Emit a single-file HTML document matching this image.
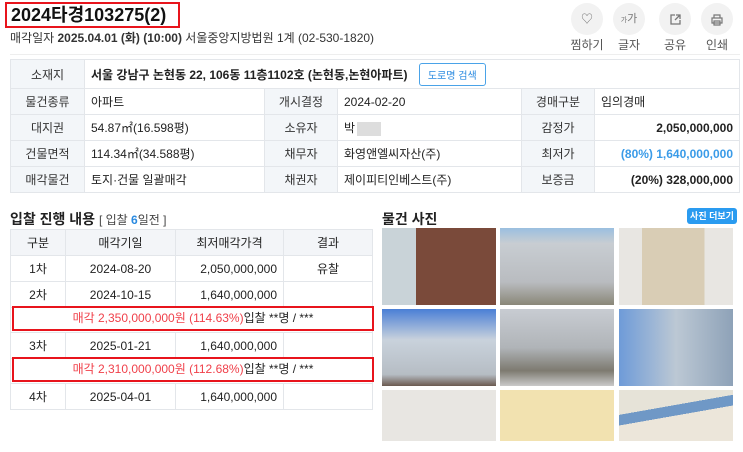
<!DOCTYPE html><html><head><meta charset="utf-8"><style>
*{margin:0;padding:0;box-sizing:border-box}
body{width:743px;height:452px;background:#fff;font-family:"Liberation Sans","Noto Sans CJK KR",sans-serif;color:#222;position:relative;overflow:hidden;font-size:12px}
.a{position:absolute}
.title{left:5px;top:2px;width:175px;height:26px;border:2px solid #e8141c;font-size:18px;font-weight:bold;line-height:22px;padding-left:4px;color:#111}
.sub{left:10px;top:29px;font-size:12px;color:#333}
.ic{width:32px;height:32px;border-radius:50%;background:#f2f2f2;top:3px;text-align:center;line-height:32px;color:#777;font-size:12px}
.il{top:36px;font-size:12px;color:#555;width:40px;text-align:center}
table{border-collapse:collapse;position:absolute}
td{border:1px solid #e3e6ea;font-size:12px;padding:0 6px;white-space:nowrap}
.m td{height:26px}
.m td.l{background:#f3f6f9;text-align:center;color:#333}
.m td.r{text-align:right;font-weight:bold}
.b td{text-align:center;height:26px}
.b tr.h td{background:#f3f5f8}
.red{color:#f0404a}
.box{border:2px solid #e8141c;left:12px;width:362px;height:25px;text-align:center;line-height:21px;font-size:12px}
.ph{position:absolute;width:114px}
</style></head><body>
<div class="a title">2024타경103275(2)</div>
<div class="a sub">매각일자 <b>2025.04.01 (화) (10:00)</b> 서울중앙지방법원 1계 (02-530-1820)</div>
<div class="a ic" style="left:571px">♡</div><div class="a il" style="left:567px">찜하기</div>
<div class="a ic" style="left:613px;font-size:11px"><span style="font-size:7px">가</span>가</div><div class="a il" style="left:609px">글자</div>
<div class="a ic" style="left:659px"><svg width="11" height="11" viewBox="0 0 11 11" style="vertical-align:middle"><path d="M5 1H1v9h9V6M6 1h4v4M10 1L5 6" fill="none" stroke="#777" stroke-width="1.3"/></svg></div><div class="a il" style="left:655px">공유</div>
<div class="a ic" style="left:701px"><svg width="12" height="12" viewBox="0 0 12 12" style="vertical-align:middle"><path d="M3 4V1h6v3M1 4h10v5H1zM3 7h6v4H3z" fill="#f2f2f2" stroke="#777" stroke-width="1.2"/></svg></div><div class="a il" style="left:697px">인쇄</div>
<div class="a" style="left:10px;top:54px;width:730px;border-top:1px solid #eee"></div>
<table class="m" style="left:10px;top:59px;width:730px">
<tr><td class="l" style="width:74px;height:29px">소재지</td><td colspan="5" style="font-weight:bold">서울 강남구 논현동 22, 106동 11층1102호 (논현동,논현아파트) <span style="display:inline-block;margin-left:8px;border:1px solid #4aa3e8;color:#2a8ae0;border-radius:3px;font-size:10px;font-weight:normal;padding:3px 8px">도로명 검색</span></td></tr>
<tr><td class="l">물건종류</td><td style="width:180px">아파트</td><td class="l" style="width:73px">개시결정</td><td style="width:184px">2024-02-20</td><td class="l" style="width:73px">경매구분</td><td>임의경매</td></tr>
<tr><td class="l">대지권</td><td>54.87㎡(16.598평)</td><td class="l">소유자</td><td>박<span style="display:inline-block;width:24px;height:14px;background:#ddd;vertical-align:middle;margin-left:2px"></span></td><td class="l">감정가</td><td class="r">2,050,000,000</td></tr>
<tr><td class="l">건물면적</td><td>114.34㎡(34.588평)</td><td class="l">채무자</td><td>화영앤엘씨자산(주)</td><td class="l">최저가</td><td class="r" style="color:#3a9be8">(80%) 1,640,000,000</td></tr>
<tr><td class="l">매각물건</td><td>토지·건물 일괄매각</td><td class="l">채권자</td><td>제이피티인베스트(주)</td><td class="l">보증금</td><td class="r">(20%) 328,000,000</td></tr>
</table>
<div class="a" style="left:10px;top:209px;font-size:14px;font-weight:bold">입찰 진행 내용 <span style="font-size:12px;font-weight:normal;color:#444">[ 입찰 <b style="color:#2a8ae0">6</b>일전 ]</span></div>
<table class="b" style="left:10px;top:229px;width:363px">
<tr class="h"><td style="width:55px">구분</td><td style="width:110px">매각기일</td><td style="width:108px">최저매각가격</td><td>결과</td></tr>
<tr><td>1차</td><td>2024-08-20</td><td style="text-align:right">2,050,000,000</td><td>유찰</td></tr>
<tr><td>2차</td><td>2024-10-15</td><td style="text-align:right">1,640,000,000</td><td></td></tr>
<tr><td colspan="4" style="height:25px"></td></tr>
<tr><td>3차</td><td>2025-01-21</td><td style="text-align:right">1,640,000,000</td><td></td></tr>
<tr><td colspan="4" style="height:25px"></td></tr>
<tr><td>4차</td><td>2025-04-01</td><td style="text-align:right">1,640,000,000</td><td></td></tr>
</table>
<div class="a box" style="top:306px"><span class="red">매각 2,350,000,000원 (114.63%)</span>입찰 **명 / ***</div>
<div class="a box" style="top:357px"><span class="red">매각 2,310,000,000원 (112.68%)</span>입찰 **명 / ***</div>
<div class="a" style="left:382px;top:209px;font-size:14px;font-weight:bold">물건 사진</div>
<div class="a" style="left:687px;top:208px;width:50px;height:16px;line-height:16px;text-align:center;white-space:nowrap;background:#2a9bf0;color:#fff;font-size:9px;font-weight:bold;border-radius:3px">사진 더보기</div>
<div class="ph" style="left:382px;top:228px;height:77px;background:linear-gradient(90deg,#c9d3d8 0 30%,#7a4a3a 30% 100%)"></div>
<div class="ph" style="left:500px;top:228px;height:77px;background:linear-gradient(180deg,#9bbfe0 0,#c8cdd2 20%,#b9bcc0 70%,#8a8778 100%)"></div>
<div class="ph" style="left:619px;top:228px;height:77px;background:linear-gradient(90deg,#e8e6e2 0 20%,#d9cdb5 20% 75%,#e8e6e2 75%)"></div>
<div class="ph" style="left:382px;top:309px;height:77px;background:linear-gradient(180deg,#4a7fd6 0,#c9d2dc 40%,#b6bdc4 85%,#6b5a50 100%)"></div>
<div class="ph" style="left:500px;top:309px;height:77px;background:linear-gradient(180deg,#c8ccd2 0,#b0b4b8 50%,#7d7a70 80%,#c9c9c9 100%)"></div>
<div class="ph" style="left:619px;top:309px;height:77px;background:linear-gradient(90deg,#6e9bd8 0,#bcc8d4 50%,#8ea2b8 100%)"></div>
<div class="ph" style="left:382px;top:390px;height:51px;background:#e8e6e2"></div>
<div class="ph" style="left:500px;top:390px;height:51px;background:#f2e2b0"></div>
<div class="ph" style="left:619px;top:390px;height:51px;background:linear-gradient(170deg,#e6e3d8 0 35%,#6f98c6 35% 50%,#ece6da 50%)"></div>
</body></html>
